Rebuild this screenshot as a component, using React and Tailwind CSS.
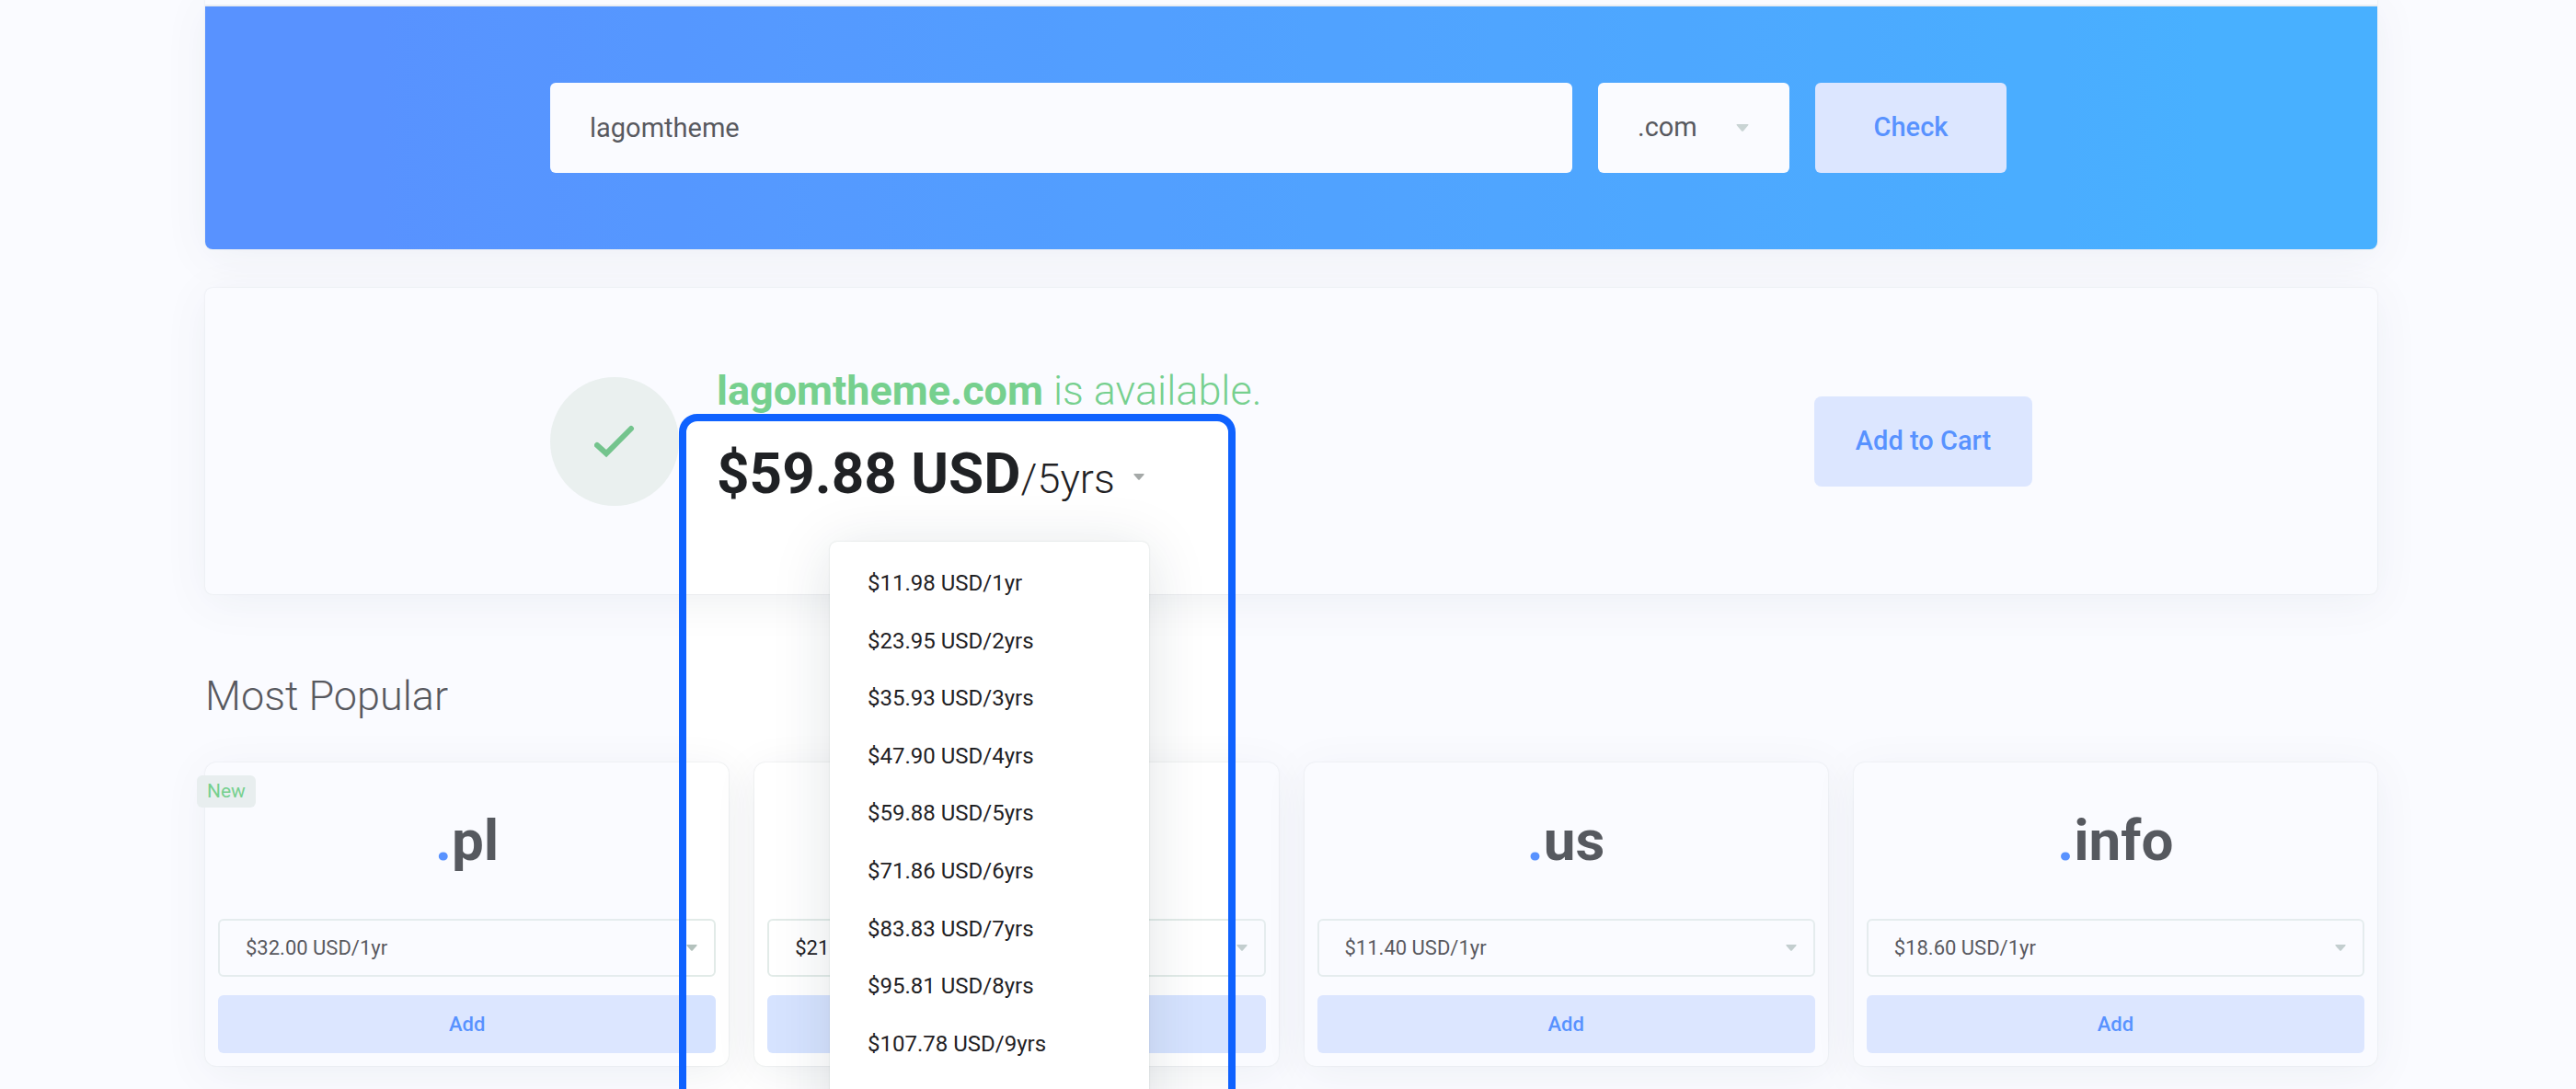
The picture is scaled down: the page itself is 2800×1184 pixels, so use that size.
import React, { useState } from "react";

const TERMS = [
  "$11.98 USD/1yr",
  "$23.95 USD/2yrs",
  "$35.93 USD/3yrs",
  "$47.90 USD/4yrs",
  "$59.88 USD/5yrs",
  "$71.86 USD/6yrs",
  "$83.83 USD/7yrs",
  "$95.81 USD/8yrs",
  "$107.78 USD/9yrs",
];

const POPULAR = [
  { tld: "pl", price: "$32.00 USD/1yr", badge: "New" },
  { tld: "com", price: "$21.00 USD/1yr" },
  { tld: "us", price: "$11.40 USD/1yr" },
  { tld: "info", price: "$18.60 USD/1yr" },
];

const CARD_SHADOW =
  "shadow-[0_0_2px_rgba(20,50,40,0.14),0_8px_48px_rgba(20,40,70,0.07)]";

function Caret({ className }) {
  return (
    <svg viewBox="0 0 12 7" aria-hidden="true" className={className}>
      <path d="M1 0h10q1 0 .6 .9L7 6.3q-1 1.1-2 0L.4 .9Q0 0 1 0Z" fill="currentColor" />
    </svg>
  );
}

function SearchPanel() {
  return (
    <section className={`rounded-b-lg ${CARD_SHADOW}`}>
      <div className="h-[7px] border-b-2 border-[#ebeeee] bg-white" />
      <form
        className="flex gap-7 rounded-b-lg bg-linear-to-r from-[#2170ff] from-8% to-[#0c98ff] to-92% py-[83px] pr-[403px] pl-[375px]"
        onSubmit={(e) => e.preventDefault()}
      >
        <input
          type="text"
          aria-label="Domain name"
          defaultValue="lagomtheme"
          className="h-[98px] min-w-0 flex-1 rounded-md bg-white px-[43px] text-[29px] text-[#1f2124] outline-none"
        />
        <div className="relative">
          <select
            aria-label="Domain extension"
            className="h-[98px] w-52 appearance-none rounded-md bg-white pl-[43px] text-[29px] text-[#1f2124] outline-none"
          >
            <option>.com</option>
          </select>
          <Caret className="pointer-events-none absolute top-[45px] right-11 h-2 w-3.5 text-[#bccac4]" />
        </div>
        <button
          type="submit"
          className="h-[98px] w-52 rounded-md bg-[#d6e3ff] text-[29px] font-medium text-[#2170ff]"
        >
          Check
        </button>
      </form>
    </section>
  );
}

function PricePicker() {
  const [term, setTerm] = useState("5yrs");
  return (
    <div className="relative mt-[18px] pb-[5px]">
      <button type="button" aria-haspopup="listbox" className="flex items-center text-[#1f2124]">
        <span className="flex items-baseline leading-[80px]">
          <span className="text-[62px] font-bold">$59.88 USD</span>
          <span className="text-[45px] font-light">/{term}</span>
        </span>
        <Caret className="ml-5 h-[7px] w-3 text-[#a5a9a8]" />
      </button>

      {/* Spotlight frame: everything outside it is veiled by its spread shadow */}
      <div className="pointer-events-none absolute -top-[25px] -left-[41px] z-20 h-[1000px] w-[605px] rounded-[20px] border-8 border-[#0f62ff] shadow-[0_0_0_3000px_rgba(237,241,255,0.27)]" />

      <ul
        role="listbox"
        aria-label="Registration period"
        className="absolute top-[114px] left-[123px] z-30 grid h-[653px] w-[347px] auto-rows-fr rounded-lg bg-white pt-3.5 pb-[76px] shadow-[0_0_2px_rgba(20,50,40,0.16),0_8px_64px_rgba(20,50,60,0.13)]"
      >
        {TERMS.map((t) => (
          <li key={t} role="option" aria-selected={t.endsWith("/" + term)} className="flex">
            <button
              type="button"
              onClick={() => setTerm(t.split("/")[1])}
              className="flex-1 px-[41px] text-left text-2xl text-[#1f2124]"
            >
              {t}
            </button>
          </li>
        ))}
      </ul>
    </div>
  );
}

function ResultPanel() {
  return (
    <section
      className={`mt-[42px] flex items-center rounded-lg bg-white py-20 pr-[375px] pl-[375px] ${CARD_SHADOW}`}
    >
      <div className="flex size-[140px] shrink-0 items-center justify-center rounded-full bg-[#e9f0ea]">
        <svg viewBox="0 0 44 36" fill="none" aria-hidden="true" className="h-9 w-11">
          <path
            d="M3 22L13 31L40 4"
            stroke="#48b463"
            strokeWidth="6"
            strokeLinecap="round"
            strokeLinejoin="miter"
          />
        </svg>
      </div>
      <div className="ml-[41px] flex-1 self-start">
        <h2 className="text-[45px] leading-[64px] text-[#4ac465]">
          <span className="font-bold">lagomtheme.com</span>
          <span className="font-light"> is available.</span>
        </h2>
        <PricePicker />
      </div>
      <button
        type="button"
        className="h-[98px] w-[237px] rounded-lg bg-[#d6e3ff] text-[29px] font-medium text-[#2170ff]"
      >
        Add to Cart
      </button>
    </section>
  );
}

function TldCard({ tld, price, badge }) {
  return (
    <article className={`relative rounded-xl bg-white px-3.5 pb-3.5 ${CARD_SHADOW}`}>
      {badge && (
        <span className="absolute top-3.5 -left-[9px] rounded-md bg-[#e6eee9] px-[11px] text-[21px] leading-[35px] text-[#4ac465]">
          {badge}
        </span>
      )}
      <h3 className="py-12 text-center text-[62px] leading-[74px] font-bold text-[#1f2124]">
        <span className="text-[#2170ff]">.</span>
        {tld}
      </h3>
      <div className="relative">
        <select
          aria-label={`Price for .${tld}`}
          className="h-[63px] w-full appearance-none rounded-md border-2 border-[#e2ebe8] bg-white px-7 text-[22px] text-[#1f2124] outline-none"
        >
          <option>{price}</option>
        </select>
        <Caret className="pointer-events-none absolute top-7 right-5 h-[7px] w-3 text-[#b4c2bd]" />
      </div>
      <button
        type="button"
        className="mt-5 h-[63px] w-full rounded-md bg-[#d6e3ff] text-[22px] font-medium text-[#2170ff]"
      >
        Add
      </button>
    </article>
  );
}

export default function App() {
  return (
    <div className="h-screen overflow-hidden bg-white font-[Roboto,sans-serif]">
      <main className="pr-[216px] pl-[223px]">
        <SearchPanel />
        <ResultPanel />
        <section>
          <h2 className="mt-20 text-[45px] leading-[62px] font-light text-[#1f2124]">
            Most Popular
          </h2>
          <div className="mt-[41px] grid grid-cols-4 gap-7">
            {POPULAR.map((p) => (
              <TldCard key={p.tld} {...p} />
            ))}
          </div>
        </section>
      </main>
    </div>
  );
}
